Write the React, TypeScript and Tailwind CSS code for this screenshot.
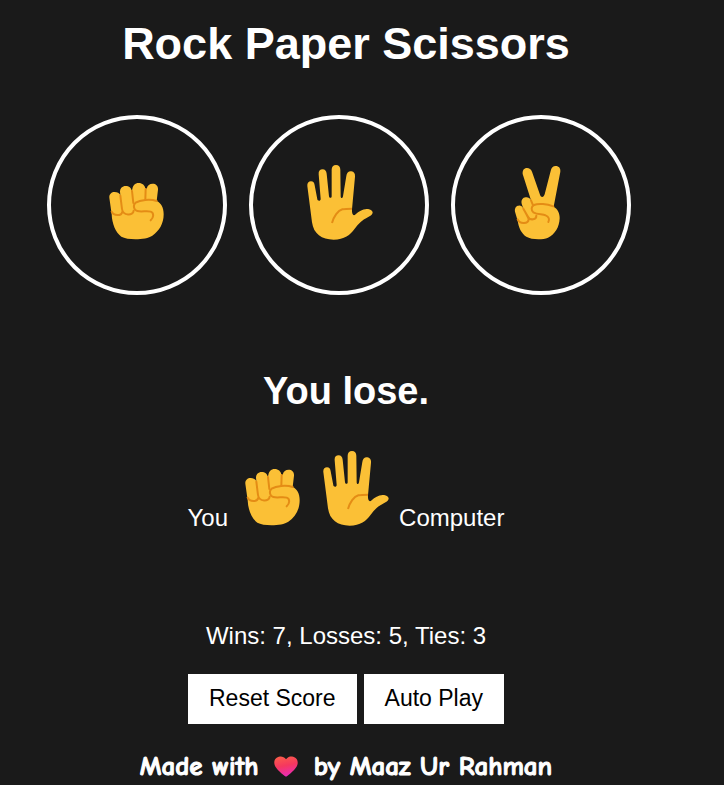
import React, { useState } from "react";

type Move = "rock" | "paper" | "scissors";

const LINE = { fill: "none", stroke: "#e48c15", strokeWidth: 6, strokeLinecap: "round" as const, strokeLinejoin: "round" as const };

function Rock() {
  return (
    <svg viewBox="27 14 225 225" className="size-[75px] shrink-0" aria-hidden="true">
      <path
        fill="#fbc036"
        d="M58 112C57 102 64 95 74 95C82 95 88 99 91 104L90 94C90 84 97 77 107 77C117 77 124 83 125 91L127 87C128 76 135 68 146 68C157 68 165 75 166 85L170 85C172 75 179 70 188 70C198 70 205 77 204 88L200 122C213 128 221 141 221 162C221 190 208 212 187 226C168 239 114 240 94 229C77 217 66 190 65 162Z"
      />
      <path {...LINE} d="M65 154C71 167 94 168 97 154M91 106L96 146C99 167 130 167 131 151M126 92L130 128M167 86L166 118" />
      <path {...LINE} d="M200 122C180 115 150 119 137 127C128 134 131 149 142 152C155 156 170 150 182 154C193 158 191 172 182 180" />
    </svg>
  );
}

function Paper() {
  return (
    <svg viewBox="34 44 225 225" className="size-[75px] shrink-0" aria-hidden="true">
      <path
        fill="#fbc036"
        d="M53 107C52 98 57 93 64 93C71 93 74 97 75 105L83 147C84 153 93 153 93 146L87 72C86 62 91 57 99 57C106 57 110 62 111 70L118 138C119 144 126 144 126 138L126 58C126 49 131 44 139 44C147 44 152 50 152 58L153 138C153 145 159 145 160 138L170 77C171 67 177 62 185 63C193 64 197 70 196 79L187 177C186 192 191 199 198 192C207 184 218 176 231 176C242 176 249 181 249 187C248 193 241 197 232 202C219 208 207 219 195 235C182 254 164 267 132 268C96 268 72 251 67 216Z"
      />
      <path {...LINE} strokeLinecap="butt" d="M127 218C132 198 145 180 158 177C167 175 176 175 187 175" />
    </svg>
  );
}

function Scissors() {
  return (
    <svg viewBox="40 44 225 225" className="size-[75px] shrink-0" aria-hidden="true">
      <path
        fill="#fbc036"
        d="M99 71C98 60 103 53 112 53C119 53 124 57 127 64L151 133C154 142 162 142 165 132L183 62C185 52 190 47 198 47C208 47 213 54 212 64L192 169C204 176 210 188 210 204C209 231 196 252 175 262C158 269 125 268 110 259C95 249 87 232 84 211L76 184C74 174 79 166 87 166C93 165 98 169 101 175L96 160C94 149 99 142 108 141C115 140 121 144 124 150Z"
      />
      <path {...LINE} d="M84 207C91 223 116 220 117 207C116 202 109 190 101 175M101 175L115 199C122 212 141 208 140 196M124 150L129 162" />
      <path {...LINE} d="M191 168C172 161 146 158 133 164C124 168 124 180 131 186C144 194 158 190 168 195C178 199 180 208 176 215" />
    </svg>
  );
}

const ICONS: Record<Move, () => React.JSX.Element> = { rock: Rock, paper: Paper, scissors: Scissors };
const MOVES: Move[] = ["rock", "paper", "scissors"];

function Heart() {
  return (
    <svg viewBox="0 0 24 22" preserveAspectRatio="none" className="mx-1.5 inline-block h-[21px] w-6 align-[-2px]" role="img" aria-label="love">
      <defs>
        <linearGradient id="heart" x1="0.35" y1="0" x2="0.6" y2="1">
          <stop offset="0" stopColor="#fb5a4b" />
          <stop offset="0.45" stopColor="#f5385f" />
          <stop offset="1" stopColor="#e92bbd" />
        </linearGradient>
      </defs>
      <path
        fill="url(#heart)"
        d="M12 3.4C14 .7 16.400 .4 18 .6C21.600 1 24 4 23.700 7.600C23.300 12.500 18 17 12.900 21.200C12.300 21.700 11.700 21.700 11.100 21.200C6 17 .7 12.500 .3 7.600C0 4 2.400 1 6 .6C8.200 .4 10.500 1.200 12 3.400Z"
      />
    </svg>
  );
}

export default function App() {
  const [round, setRound] = useState<{ you: Move; computer: Move }>({ you: "rock", computer: "paper" });
  const [score, setScore] = useState({ wins: 7, losses: 5, ties: 3 });

  function play(you: Move) {
    const computer = MOVES[Math.floor(Math.random() * 3)];
    const diff = (MOVES.indexOf(you) - MOVES.indexOf(computer) + 3) % 3;
    setRound({ you, computer });
    setScore((s) => ({
      wins: s.wins + (diff === 1 ? 1 : 0),
      losses: s.losses + (diff === 2 ? 1 : 0),
      ties: s.ties + (diff === 0 ? 1 : 0),
    }));
  }

  const diff = (MOVES.indexOf(round.you) - MOVES.indexOf(round.computer) + 3) % 3;
  const result = diff === 0 ? "Tie." : diff === 1 ? "You win." : "You lose.";
  const You = ICONS[round.you];
  const Computer = ICONS[round.computer];

  return (
    <main className="flex min-h-screen flex-col items-center bg-[#1a1a1a] pt-[18px] pr-8 font-['Liberation_Sans',Arial,sans-serif] text-2xl text-white">
      <h1 className="text-[45px] leading-[52px] font-bold">Rock Paper Scissors</h1>

      <div className="mt-[45px] flex gap-[22px] pr-[15px]">
        {MOVES.map((move) => {
          const Icon = ICONS[move];
          return (
            <button
              key={move}
              aria-label={move}
              onClick={() => play(move)}
              className="flex size-[180px] items-center justify-center rounded-full border-4 border-white pb-[5px]"
            >
              <Icon />
            </button>
          );
        })}
      </div>

      <h2 className="mt-[74px] text-[38px] leading-[44px] font-bold">{result}</h2>

      <p className="mt-[38px] flex items-baseline gap-[7px]">
        You
        <You />
        <Computer />
        Computer
      </p>

      <p className="mt-[86px] leading-8">
        Wins: {score.wins}, Losses: {score.losses}, Ties: {score.ties}
      </p>

      <div className="mt-[22px] flex gap-[7px] text-[23px] text-black">
        <button onClick={() => setScore({ wins: 0, losses: 0, ties: 0 })} className="h-[50px] bg-white px-[21px] pb-0.5">
          Reset Score
        </button>
        <button onClick={() => play(MOVES[Math.floor(Math.random() * 3)])} className="h-[50px] bg-white px-[21px] pb-0.5">
          Auto Play
        </button>
      </div>

      <footer className="mt-[27px] font-['Comic_Sans_MS','Comic_Neue',Lato,sans-serif] text-[27px] leading-8 font-bold whitespace-nowrap [-webkit-text-stroke:1px_white]">
        Made with <Heart /> by Maaz Ur Rahman
      </footer>
    </main>
  );
}
